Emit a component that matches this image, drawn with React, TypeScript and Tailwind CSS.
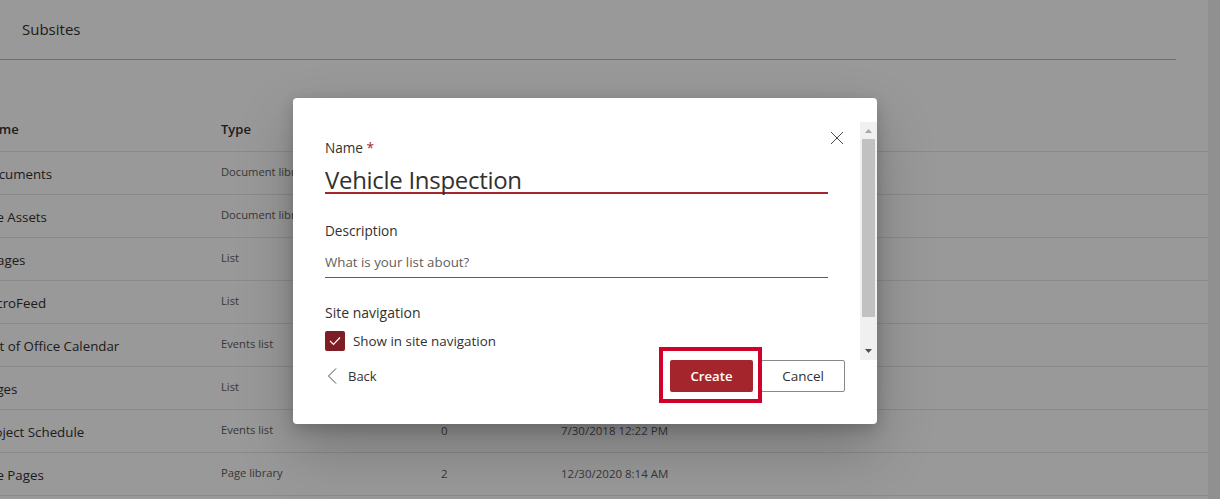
import React from "react";

const rows = [
  { name: "Documents", type: "Document library" },
  { name: "Site Assets", type: "Document library" },
  { name: "Images", type: "List" },
  { name: "MicroFeed", type: "List" },
  { name: "Out of Office Calendar", type: "Events list" },
  { name: "Pages", type: "List" },
  { name: "Project Schedule", type: "Events list", count: "0", date: "7/30/2018 12:22 PM" },
  { name: "Site Pages", type: "Page library", count: "2", date: "12/30/2020 8:14 AM" },
];

const Background = () => {
  return (
    <div className="flex h-[499px] overflow-hidden bg-white">
      <div className="flex-1 min-w-0">
        <div className="h-[60px] mr-[32px] pl-[22px] flex items-center border-b border-[#b9b9b9] text-[15px] text-[#323130]">
          Subsites
        </div>

        <div className="-ml-[19px] mt-[49px]">
          <div className="h-[43px] flex items-center border-b border-[#e6e6e6] text-[13px] font-semibold text-[#323130]">
            <div className="w-[240px]">Name</div>
            <div>Type</div>
          </div>
          {rows.map((row) => (
            <div
              key={row.name}
              className="h-[43px] flex items-center border-b border-[#e6e6e6] text-[#323130]"
            >
              <div className="w-[240px] text-[13.3px] pt-[3px]">{row.name}</div>
              <div className="w-[220px] text-[11.2px] text-[#605e5c] pb-[1px]">{row.type}</div>
              <div className="w-[120px] text-[11.5px] text-[#605e5c] pb-[1px]">{row.count}</div>
              <div className="text-[11.5px] text-[#605e5c] pb-[1px]">{row.date}</div>
            </div>
          ))}
        </div>
      </div>
      <div className="w-[12px] bg-[#f1f1f1]"></div>
    </div>
  );
};

const Scrollbar = () => {
  return (
    <div className="w-[17px] h-[238px] bg-[#f0f0f0] flex flex-col items-center">
      <div className="h-[17px] w-full flex items-center justify-center">
        <svg width="7" height="4" viewBox="0 0 7 4">
          <path d="M3.5 0 7 4H0z" fill="#a8a8a8" />
        </svg>
      </div>
      <div className="w-[13px] h-[178px] bg-[#c1c1c1]"></div>
      <div className="flex-1 w-full flex items-end justify-center pb-[7px]">
        <svg width="7" height="4" viewBox="0 0 7 4">
          <path d="M0 0h7L3.5 4z" fill="#505050" />
        </svg>
      </div>
    </div>
  );
};

const Dialog = () => {
  return (
    <div className="relative w-[584px] h-[326px] bg-white rounded-[4px] pt-[24px] shadow-[0_25.6px_57.6px_rgba(0,0,0,0.22),0_4.8px_14.4px_rgba(0,0,0,0.18)]">
      <button className="absolute top-[33px] right-[33px] text-[#323130]">
        <svg width="14" height="14" viewBox="0 0 14 14" fill="none" stroke="#4a4a4a" strokeWidth="1">
          <path d="M1 1l12 12M13 1 1 13" />
        </svg>
      </button>

      <div className="flex justify-between">
        <div className="w-[503px] ml-[32px] pt-[16px] h-[238px] overflow-hidden">
          <label className="block h-[20px] text-[13.6px] leading-[20px] font-medium text-[#323130]">
            Name <span className="text-[#a4262c]">*</span>
          </label>
          <div className="h-[36px] flex items-end border-b-2 border-[#a4262c]">
            <input
              readOnly
              value="Vehicle Inspection"
              className="w-full h-[36px] -mb-[6px] text-[24px] tracking-[-0.3px] font-medium text-[#323130] outline-none bg-transparent"
            />
          </div>

          <label className="block mt-[27px] h-[20px] text-[13.6px] leading-[20px] font-medium text-[#323130]">
            Description
          </label>
          <input
            readOnly
            placeholder="What is your list about?"
            className="block w-full mt-[9px] h-[28px] pb-[4px] text-[13.3px] border-b border-[#605e5c] outline-none placeholder:text-[#605e5c]"
          />

          <label className="block mt-[25px] h-[20px] text-[14px] leading-[20px] font-medium text-[#323130]">
            Site navigation
          </label>
          <div className="mt-[8px] h-[20px] flex items-center gap-[8px]">
            <div className="w-[20px] h-[20px] rounded-[2px] bg-[#7d1d24] flex items-center justify-center">
              <svg width="12" height="10" viewBox="0 0 12 10" fill="none" stroke="#fff" strokeWidth="1.2">
                <path d="M1 5l3.5 3.5L11 1.5" />
              </svg>
            </div>
            <span className="text-[13.4px] leading-[20px] text-[#323130]">Show in site navigation</span>
          </div>
        </div>
        <Scrollbar />
      </div>

      <div className="flex items-center justify-between pl-[34px] pr-[32px]">
        <button className="flex items-center gap-[11px] text-[13px] text-[#323130]">
          <svg width="10" height="16" viewBox="0 0 10 16" fill="none" stroke="#4a4a4a" strokeWidth="1">
            <path d="M9 0.5 1.5 8 9 15.5" />
          </svg>
          <span className="pt-[1px]">Back</span>
        </button>
        <div className="relative flex gap-[8px]">
          <button className="w-[83px] h-[32px] pt-[1px] rounded-[2px] bg-[#a4262c] text-white text-[13.2px] font-semibold">
            Create
          </button>
          <button className="w-[84px] h-[32px] pt-[1px] rounded-[2px] border border-[#8a8886] bg-white text-[#323130] text-[13.5px] font-medium">
            Cancel
          </button>
          {/* red callout round the Create button */}
          <div className="absolute -left-[11px] -top-[13px] w-[103px] h-[56px] border-4 border-[#cf0029]"></div>
        </div>
      </div>
    </div>
  );
};

const App = () => {
  return (
    <div className="relative w-[1220px] h-[499px] overflow-hidden font-['Open_Sans',sans-serif]">
      <Background />
      <div className="absolute inset-0 bg-black/40 pt-[98px] pl-[293px]">
        <Dialog />
      </div>
    </div>
  );
};

export default App;
